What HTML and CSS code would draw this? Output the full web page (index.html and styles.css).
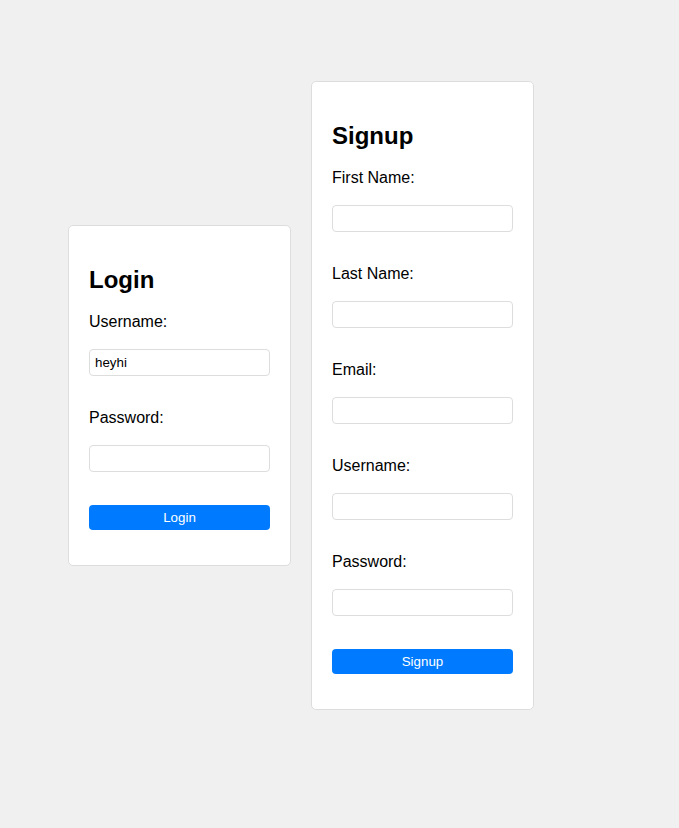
FILE: index.html
```
<!DOCTYPE html>
<html lang="en">
<head>
<meta charset="utf-8">
<title>Login / Signup</title>
<link rel="stylesheet" href="styles.css">
</head>
<body>
<div class="wrap">
  <div class="card">
    <h2>Login</h2>
    <form>
      <label for="lu">Username:</label>
      <input id="lu" type="text" value="heyhi">
      <label for="lp">Password:</label>
      <input id="lp" type="password">
      <button type="button" class="btn">Login</button>
    </form>
  </div>
  <div class="card">
    <h2>Signup</h2>
    <form>
      <label for="sf">First Name:</label>
      <input id="sf" type="text">
      <label for="sl">Last Name:</label>
      <input id="sl" type="text">
      <label for="se">Email:</label>
      <input id="se" type="email">
      <label for="su">Username:</label>
      <input id="su" type="text">
      <label for="sp">Password:</label>
      <input id="sp" type="password">
      <button type="button" class="btn">Signup</button>
    </form>
  </div>
</div>
</body>
</html>
```
FILE: styles.css
```
html, body {
  margin: 0;
  padding: 0;
}
body {
  background: #f0f0f0;
  font-family: "Liberation Sans", Arial, sans-serif;
  color: #000;
  min-height: 828px;
}
.wrap {
  display: flex;
  align-items: center;
  gap: 20px;
  padding: 81px 0 0 68px;
}
.card {
  width: 181px;
  padding: 20px;
  background: #fff;
  border: 1px solid #ddd;
  border-radius: 5px;
}
h2 {
  font-size: 24px;
  font-weight: bold;
  margin: 20px 0 19px;
}
form {
  margin: 0;
}
label {
  display: block;
  font-size: 16px;
  line-height: 18.4px;
}
input {
  display: block;
  box-sizing: border-box;
  width: 100%;
  height: 27px;
  margin: 17.6px 0 33px;
  padding: 5px;
  border: 1px solid #ddd;
  border-radius: 4px;
  font-family: "Liberation Sans", Arial, sans-serif;
  font-size: 13.33px;
  color: #000;
  background: #fff;
  outline: none;
}
.btn {
  display: block;
  box-sizing: border-box;
  width: 100%;
  height: 25px;
  margin: 33px 0 15px;
  padding: 0;
  border: none;
  border-radius: 4px;
  background: #007bff;
  color: #fff;
  font-family: "Liberation Sans", Arial, sans-serif;
  font-size: 13.33px;
  font-weight: normal;
  cursor: pointer;
}
```
